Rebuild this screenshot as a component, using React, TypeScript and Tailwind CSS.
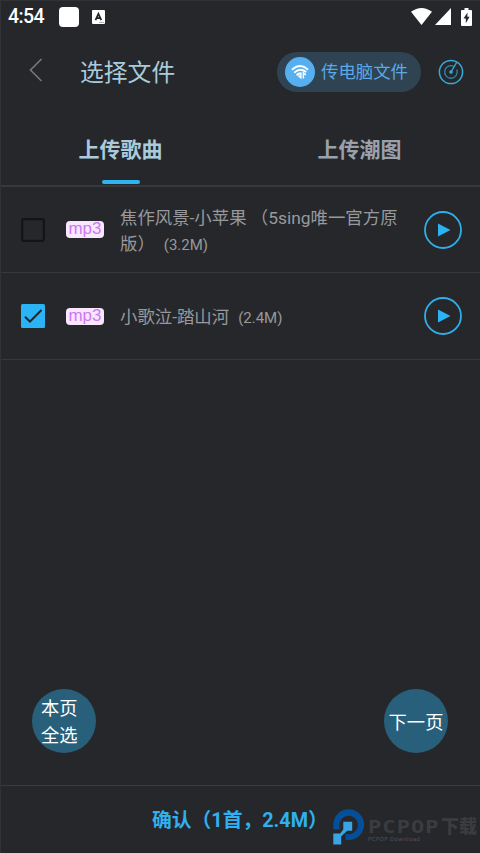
import { useState } from "react";

type Song = {
  id: number;
  name: string;
  size: string;
};

const songs: Song[] = [
  { id: 1, name: "焦作风景-小苹果 （5sing唯一官方原版）", size: "(3.2M)" },
  { id: 2, name: "小歌泣-踏山河", size: "(2.4M)" },
];

const StatusBar = () => (
  <div className="flex h-[31px] items-center pr-[8px] pl-[7px] text-white">
    <span className="w-[51px] text-[19.5px] leading-[31px] font-medium tracking-[-0.6px]">
      4:54
    </span>
    <span className="size-5 rounded-[4px] bg-white" />
    <svg className="ml-[13px]" width="13" height="14" viewBox="0 0 13 14">
      <rect width="13" height="14" rx="1" fill="#fff" />
      <path
        d="M3.5 10.2 6.4 3.8 9.3 10.2M4.6 8.2h3.6"
        fill="none"
        stroke="#222"
        strokeWidth="1.7"
      />
      <path d="M7 12.4h5" stroke="#aaa" />
    </svg>
    <svg className="ml-auto" width="21" height="17" viewBox="0 0 21 17">
      <path d="M0 3.8Q10.5-3.8 21 3.8L10.5 17Z" fill="#fff" />
    </svg>
    <svg className="ml-[3px]" width="16" height="17" viewBox="0 0 16 17">
      <path d="M16 0v17H0Z" fill="#fff" />
    </svg>
    <svg className="ml-[10px]" width="11" height="18" viewBox="0 0 11 18">
      <path d="M3.5 0h4v2H10q1 0 1 1v14q0 1-1 1H1q-1 0-1-1V3q0-1 1-1h2.5Z" fill="#fff" />
      <path d="M6.5 4.5 2.5 10.6h2.3v4.6l3.8-6.4H6.4Z" fill="#26272b" />
    </svg>
  </div>
);

const Header = () => (
  <header className="flex h-20 items-center pr-4 pl-[27px]">
    <svg className="-mt-[5px]" width="16" height="26" viewBox="0 0 16 26">
      <path d="M13.5 2 2.5 13l11 11" fill="none" stroke="#77787c" strokeWidth="1.6" />
    </svg>
    <h1 className="mt-[3px] ml-9 text-[23.8px] font-normal text-[#a9cbdc]">选择文件</h1>
    <button className="ml-auto flex h-10 w-36 items-center gap-1.5 rounded-full bg-[#2f4352] pl-2 text-[17.4px] whitespace-nowrap text-[#5aa9e6]">
      <svg className="shrink-0" width="30" height="30" viewBox="0 0 30 30">
        <circle cx="15" cy="15" r="15" fill="#56b0f0" />
        <g fill="none" stroke="#fff" strokeWidth="1.9" strokeLinecap="round">
          <path d="M7.5 12.2Q15 5.8 22.5 12.2" />
          <path d="M9.8 15.2Q15 10.8 20.6 14.6" />
          <path d="M12.2 17.8Q13.7 16.4 15.6 16.6" />
        </g>
        <path
          d="M15.8 15.5v5.2l-2.4-2M18.4 21.5v-5.6l2.5 2"
          fill="none"
          stroke="#fff"
          strokeWidth="1.5"
        />
      </svg>
      <span className="mt-px">传电脑文件</span>
    </button>
    <svg className="ml-[17px]" width="26" height="26" viewBox="0 0 26 26">
      <g fill="none" stroke="#37a9dc">
        <circle cx="13" cy="13" r="11.6" strokeWidth="1.5" />
        <path
          d="M16.1 7.5A6.3 6.3 0 1 0 18.8 10.6"
          stroke="#3087ad"
          strokeWidth="1.3"
        />
        <path d="M13 13 18.6 3.5" strokeWidth="1.4" />
      </g>
      <circle cx="13" cy="13" r="1.8" fill="#37a9dc" />
    </svg>
  </header>
);

const Tabs = () => (
  <nav className="grid h-[75px] grid-cols-2 border-b-2 border-[#37383c] pr-px text-[21px] font-bold">
    <div className="flex flex-col items-center pt-[22px] text-[#a9cbdc]">
      <span className="leading-8">上传歌曲</span>
      <span className="mt-[14px] h-1 w-[38px] rounded-full bg-[#30b4f0]" />
    </div>
    <div className="flex flex-col items-center pt-[22px] text-[#9ba1ab]">
      <span className="leading-8">上传潮图</span>
    </div>
  </nav>
);

type SongRowProps = {
  song: Song;
  checked: boolean;
  onToggle: () => void;
};

const SongRow: React.FC<SongRowProps> = ({ song, checked, onToggle }) => (
  <li className="flex h-[86px] items-center border-b border-[#37383c] pr-[18px] pl-5 last:h-[87px]">
    <button onClick={onToggle} className="shrink-0">
      <svg width="24" height="24" viewBox="0 0 24 24">
        {checked ? (
          <>
            <rect width="24" height="24" rx="1.5" fill="#2bb3f5" />
            <path d="m4 12.7 5 4.8L20.5 6" fill="none" stroke="#1e252b" strokeWidth="2" />
          </>
        ) : (
          <rect x="1.2" y="1.2" width="21.6" height="21.6" rx="1" fill="none" stroke="#131417" strokeWidth="2.2" />
        )}
      </svg>
    </button>
    <span className="ml-[21px] flex h-[17px] w-[38px] shrink-0 items-center justify-center rounded-[4px] bg-[#f8e7fd] pb-0.5 font-['Liberation_Sans',sans-serif] text-[17px] leading-[17px] text-[#cd78f6]">
      mp3
    </span>
    <p className="mt-0.5 ml-4 w-[290px] text-[17.4px] leading-[26px] text-[#98999c]">
      {song.name}
      <span className="ml-[9px] text-[15px] leading-none">{song.size}</span>
    </p>
    <button className="ml-auto shrink-0">
      <svg width="38" height="38" viewBox="0 0 38 38">
        <circle cx="19" cy="19" r="18" fill="none" stroke="#2fafea" strokeWidth="1.8" />
        <path d="M14 12.5v13L26.5 19Z" fill="#2bb3f5" />
      </svg>
    </button>
  </li>
);

const Watermark = () => (
  <div className="absolute top-[23px] left-[332px] flex text-[#3b3c3f]">
    <svg width="32" height="37" viewBox="0 0 32 37">
      <path d="M.3 20.5V15.5A15.4 15.4 0 1 1 12.5 30.7V24.6A9.2 9.2 0 1 0 6.5 17V20.5Z" fill="#034f9a" />
      <path d="M10.3 12.8H19.2V21.8H14.2L8.2 27.5V35.5H.3V24.5H7.2L10.3 20.5Z" fill="#3aa5e6" />
    </svg>
    <div className="ml-[3px] pt-[9px] whitespace-nowrap">
      <div className="flex items-center text-[18px] leading-[18px] font-black">
        <span className="w-[73px] origin-left scale-x-[1.22] font-['DejaVu_Sans_Mono',monospace] text-[18px] font-bold tracking-[0.9px]">
          PCPOP
        </span>
        <span>下载</span>
      </div>
      <div className="font-['DejaVu_Sans',sans-serif] text-[5.6px] leading-[7px] tracking-[0.3px] text-[#515256]">
        PCPOP Download
      </div>
    </div>
  </div>
);

export default function App() {
  const [selected, setSelected] = useState<number[]>([2]);

  const toggle = (id: number) =>
    setSelected((prev) =>
      prev.includes(id) ? prev.filter((x) => x !== id) : [...prev, id]
    );

  return (
    <div className="flex h-[853px] w-[480px] flex-col overflow-hidden border-t border-l border-[#303236] bg-[#26272b] font-[Roboto,'Noto_Sans_CJK_SC',sans-serif]">
      <StatusBar />
      <Header />
      <Tabs />
      <ul className="flex-1">
        {songs.map((song) => (
          <SongRow
            key={song.id}
            song={song}
            checked={selected.includes(song.id)}
            onToggle={() => toggle(song.id)}
          />
        ))}
      </ul>
      <div className="mb-8 flex justify-between pr-8 pl-[31px] text-[18.3px] leading-[27px] text-white">
        <button
          onClick={() => setSelected(songs.map((s) => s.id))}
          className="size-16 rounded-full bg-[#28607b] pt-0.5 pl-[9px] text-left"
        >
          本页
          <br />
          全选
        </button>
        <button className="size-16 rounded-full bg-[#28607b] pt-0.5 whitespace-nowrap">
          下一页
        </button>
      </div>
      <footer className="relative flex h-[68px] items-center border-t border-[#3a3b3f] pl-[151px]">
        <button className="mt-[3px] text-[19.8px] font-bold whitespace-nowrap text-[#30b0ee]">
          确认（1首，2.4M）
        </button>
        <Watermark />
      </footer>
    </div>
  );
}
